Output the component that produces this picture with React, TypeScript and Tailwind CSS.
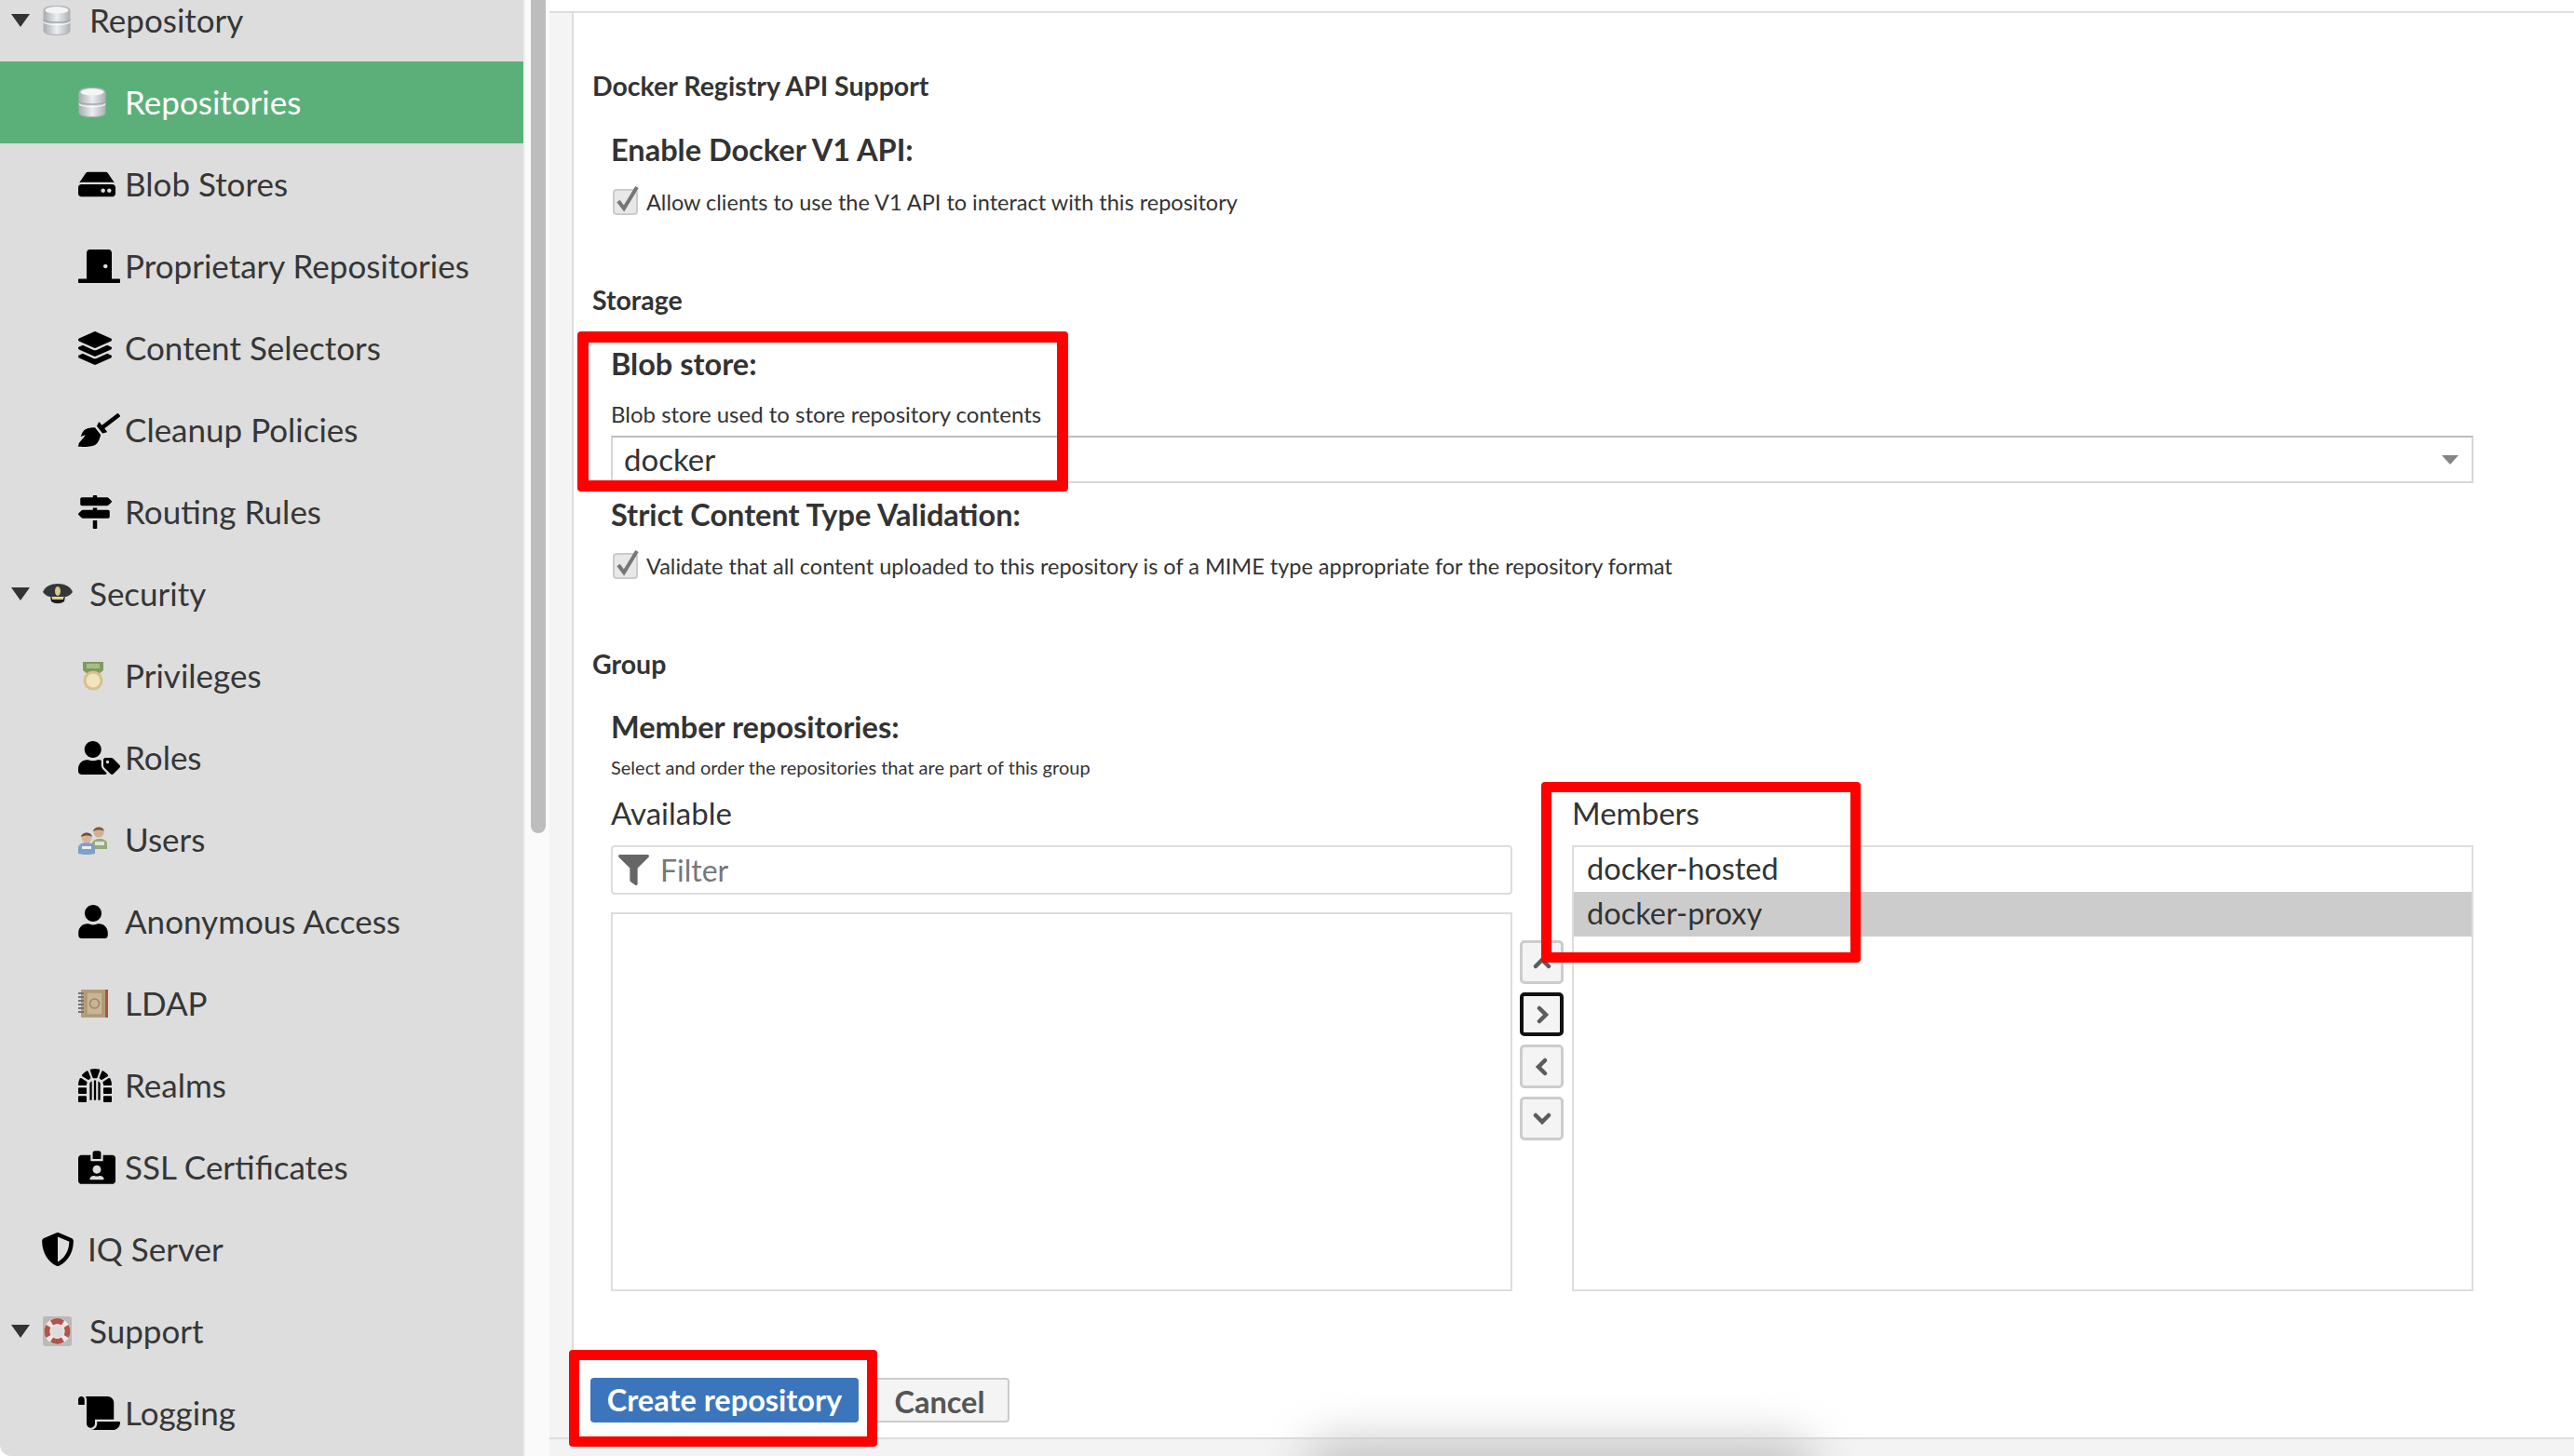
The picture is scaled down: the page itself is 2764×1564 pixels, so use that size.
import {
  FaBroom,
  FaDoorClosed,
  FaDungeon,
  FaHdd,
  FaIdCardAlt,
  FaLayerGroup,
  FaMapSigns,
  FaScroll,
  FaShieldAlt,
  FaUser,
  FaUserTag,
  FaFilter,
} from "react-icons/fa";
import type { ReactNode } from "react";

function DbIcon() {
  return (
    <svg viewBox="0 0 30 32" className="w-[30px] h-[32px]">
      <defs>
        <linearGradient id="dbg" x1="0" x2="1" y1="0" y2="0">
          <stop offset="0" stopColor="#a9adb2" />
          <stop offset="0.5" stopColor="#eceef0" />
          <stop offset="1" stopColor="#adb1b6" />
        </linearGradient>
      </defs>
      <path d="M1 5c0-3 6-4.500 14-4.500S29 2 29 5v22c0 3-6 4.500-14 4.500S1 30 1 27z" fill="url(#dbg)" stroke="#aeb1b5" strokeWidth="1" />
      <ellipse cx="15" cy="5" rx="12.500" ry="3.500" fill="#f4f5f6" />
      <path d="M1 15c2 4 26 4 28 0" fill="none" stroke="#9ea2a6" strokeWidth="1.500" />
      <path d="M1 17.500c2 4 26 4 28 0" fill="none" stroke="#f7f7f8" strokeWidth="1.500" />
    </svg>
  );
}

function CopHat() {
  return (
    <svg viewBox="0 0 32 24" className="w-[32px] h-[24px]">
      <path d="M0 10C2 4 9 1 16 1s14 3 16 9c-2 3-6 5-8 5H8c-2 0-6-2-8-5z" fill="#33363a" />
      <path d="M8 15c4 2 12 2 16 0l-1 5c-4 3-10 3-14 0z" fill="#1e1f21" />
      <ellipse cx="16" cy="9" rx="3" ry="5" fill="#d8c98a" />
      <rect x="10" y="16" width="12" height="2" fill="#d8c98a" />
    </svg>
  );
}

function MedalIcon() {
  return (
    <svg viewBox="0 0 22 31" className="w-[22px] h-[31px]">
      <path d="M0 0h22v9l-5 4H5L0 9z" fill="#7f9a5e" />
      <rect x="4" y="2" width="14" height="5" fill="#a7bd88" />
      <circle cx="11" cy="20" r="10.500" fill="#d9bf8f" />
      <circle cx="11" cy="20" r="7.500" fill="#f0e4bd" />
    </svg>
  );
}

function UsersIcon() {
  return (
    <svg viewBox="0 0 32 31" className="w-[32px] h-[31px]">
      <path d="M15 19c0-3 4-5 8-5s8 2 8 5v6H15z" fill="#94a97c" />
      <rect x="18" y="17" width="10" height="4" fill="#dfe6d5" />
      <circle cx="22" cy="7" r="5.500" fill="#d3ae92" />
      <path d="M16 6c0-5 11-7 12 0-3-2-8-2-12 0z" fill="#7a5a42" />
      <path d="M0 24c0-4 4-6 9-6s9 2 9 6v6c-5 1.500-13 1.500-18 0z" fill="#7e9fc7" />
      <rect x="4" y="22" width="10" height="3" fill="#e9eef5" />
      <circle cx="9" cy="13" r="5.500" fill="#d8b59a" />
      <path d="M3 12c0-5 11-7 12 0-3-2-8-2-12 0z" fill="#6e5039" />
    </svg>
  );
}

function BookIcon() {
  return (
    <svg viewBox="0 0 32 30" className="w-[32px] h-[30px]">
      <rect x="3" y="0" width="29" height="30" rx="1" fill="#b39c78" />
      <rect x="29" y="0" width="3" height="30" fill="#a8563e" />
      <rect x="9" y="3" width="17" height="24" fill="#c8b594" stroke="#a5906e" />
      <circle cx="17.500" cy="15" r="5" fill="none" stroke="#9b8663" strokeWidth="1.500" />
      <path d="M0 4h6M0 8h6M0 12h6M0 16h6M0 20h6M0 24h6" stroke="#77736c" strokeWidth="2" />
    </svg>
  );
}

function RingIcon() {
  return (
    <svg viewBox="0 0 31 32" className="w-[31px] h-[32px]">
      <rect x="0" y="0" width="31" height="32" rx="3" fill="#b9b9b9" />
      <circle cx="15.500" cy="16" r="14" fill="#f0e8e6" />
      <path d="M8 4.500a14 14 0 0 1 15 0l-3 5a8 8 0 0 0-9 0zM8 27.500a14 14 0 0 0 15 0l-3-5a8 8 0 0 1-9 0zM3.500 9a14 14 0 0 0 0 14l5-3a8 8 0 0 1 0-8zM27.500 9a14 14 0 0 1 0 14l-5-3a8 8 0 0 0 0-8z" fill="#b2534c" />
      <circle cx="15.500" cy="16" r="7" fill="#dddddd" />
    </svg>
  );
}

function Caret() {
  return (
    <svg viewBox="0 0 20 14" className="w-[20px] h-[14px]">
      <path d="M0 0h20L10 14z" fill="#333333" />
    </svg>
  );
}

function Chevron({ d }: { d: string }) {
  return (
    <svg viewBox="0 0 20 20" className="w-[20px] h-[20px]">
      <path d={d} fill="none" stroke="#5c5c5c" strokeWidth="4.500" strokeLinecap="round" strokeLinejoin="miter" />
    </svg>
  );
}

type Item = {
  label: string;
  icon: ReactNode;
  level: 0 | 1;
  open?: boolean;
  active?: boolean;
  tight?: boolean;
};

const navItems: Item[] = [
  { label: "Repository", icon: <DbIcon />, level: 0, open: true },
  { label: "Repositories", icon: <DbIcon />, level: 1, active: true },
  { label: "Blob Stores", icon: <FaHdd className="h-[36px] w-[40px] text-black" />, level: 1 },
  { label: "Proprietary Repositories", icon: <FaDoorClosed className="h-[36px] w-[45px] text-black" />, level: 1 },
  { label: "Content Selectors", icon: <FaLayerGroup className="h-[36px] w-[36px] text-black" />, level: 1 },
  { label: "Cleanup Policies", icon: <FaBroom className="h-[36px] w-[45px] text-black" />, level: 1 },
  { label: "Routing Rules", icon: <FaMapSigns className="h-[36px] w-[36px] text-black" />, level: 1 },
  { label: "Security", icon: <CopHat />, level: 0, open: true },
  { label: "Privileges", icon: <div className="pl-[5px]"><MedalIcon /></div>, level: 1 },
  { label: "Roles", icon: <FaUserTag className="h-[36px] w-[45px] text-black" />, level: 1 },
  { label: "Users", icon: <UsersIcon />, level: 1 },
  { label: "Anonymous Access", icon: <FaUser className="h-[36px] w-[32px] text-black" />, level: 1 },
  { label: "LDAP", icon: <BookIcon />, level: 1 },
  { label: "Realms", icon: <FaDungeon className="h-[36px] w-[36px] text-black" />, level: 1 },
  { label: "SSL Certificates", icon: <FaIdCardAlt className="h-[36px] w-[40px] text-black" />, level: 1 },
  { label: "IQ Server", icon: <FaShieldAlt className="h-[36px] w-[36px] text-black" />, level: 0, tight: true },
  { label: "Support", icon: <RingIcon />, level: 0, open: true },
  { label: "Logging", icon: <FaScroll className="h-[36px] w-[45px] text-black" />, level: 1 },
];

function NavRow({ item }: { item: Item }) {
  const indent = item.level === 1 ? "pl-[84px]" : item.tight ? "pl-[10px]" : "pl-[12px]";
  return (
    <div
      className={`h-[88px] shrink-0 flex items-center text-[35px] ${
        item.active ? "bg-[#5bb07a] text-white" : "text-[#363636]"
      } ${indent}`}
    >
      {item.level === 0 && (
        <div className="w-[34px] shrink-0">{item.open && <Caret />}</div>
      )}
      <div className="w-[50px] shrink-0 flex items-center">{item.icon}</div>
      <span className="pb-[2px]">{item.label}</span>
    </div>
  );
}

function CheckRow({ label, className }: { label: string; className: string }) {
  return (
    <div className={`flex items-start gap-[8px] text-[23.5px] leading-[32px] ${className}`}>
      <svg viewBox="0 0 28 32" className="w-[28px] h-[32px] ml-[2px] shrink-0">
        <rect x="1" y="5" width="25" height="26" rx="3" fill="#e8e8e8" stroke="#cccccc" strokeWidth="2" />
        <path d="M6 17l6 8L26 2" fill="none" stroke="#767676" strokeWidth="4" />
      </svg>
      <span className="pt-[2px]">{label}</span>
    </div>
  );
}

function SectionTitle({ children, className }: { children: ReactNode; className: string }) {
  return <h2 className={`text-[28.5px] leading-[32px] font-bold text-[#333] ${className}`}>{children}</h2>;
}

function FieldLabel({ children, className }: { children: ReactNode; className: string }) {
  return <div className={`text-[32.5px] leading-[40px] font-bold text-[#333] ${className}`}>{children}</div>;
}

function MoveButton({ children, focused }: { children: ReactNode; focused?: boolean }) {
  return (
    <button
      className={`w-[47px] h-[47px] rounded-[5px] bg-[#f4f4f4] flex items-center justify-center ${
        focused ? "border-[4px] border-[#111]" : "border-[3px] border-[#cccccc]"
      }`}
    >
      {children}
    </button>
  );
}

export default function App() {
  return (
    <div className="relative h-[1564px] w-[2764px] flex overflow-hidden bg-white rounded-bl-[12px] font-['Lato','Liberation_Sans',sans-serif]">
      {/* Sidebar */}
      <aside className="w-[564px] shrink-0 bg-[#dddddd] border-r-2 border-[#efefef] overflow-hidden">
        <div className="-mt-[22px] flex flex-col">
          {navItems.map((item) => (
            <NavRow key={item.label} item={item} />
          ))}
        </div>
      </aside>

      {/* Scrollbar */}
      <div className="w-[26px] shrink-0 bg-[#fafafa] pl-[6px]">
        <div className="w-[16px] h-[895px] bg-[#bdbdbd] rounded-b-[8px]" />
      </div>

      {/* Main column */}
      <main className="flex-1 min-w-0 flex flex-col bg-white">
        <div className="h-[12px] shrink-0" />
        <div className="h-[1534px] shrink-0 flex border-y-2 border-[#dddddd]">
          <div className="w-[26px] shrink-0 bg-[#f4f4f4] border-r-2 border-[#dddddd]" />
          <div className="flex-1 min-w-0 pl-[20px] text-[#333]">
            <SectionTitle className="mt-[62px]">Docker Registry API Support</SectionTitle>
            <div className="pl-[20px]">
              <FieldLabel className="mt-[33px]">Enable Docker V1 API:</FieldLabel>
              <CheckRow className="mt-[18px]" label="Allow clients to use the V1 API to interact with this repository" />
            </div>
            <SectionTitle className="mt-[73px]">Storage</SectionTitle>
            <div className="pl-[20px] pr-[108px]">
              <FieldLabel className="mt-[33px]">Blob store:</FieldLabel>
              <div className="mt-[20px] text-[24px] leading-[28px]">Blob store used to store repository contents</div>
              <div className="mt-[9px] h-[51px] border-2 border-[#d6d6d6] border-t-[#bdbdbd] flex items-center justify-between pl-[12px] pr-[14px] text-[33px]">
                <span>docker</span>
                <svg viewBox="0 0 18 10" className="w-[18px] h-[10px]">
                  <path d="M0 0h18l-9 10z" fill="#858585" />
                </svg>
              </div>
              <FieldLabel className="mt-[14px]">Strict Content Type Validation:</FieldLabel>
              <CheckRow className="mt-[17px]" label="Validate that all content uploaded to this repository is of a MIME type appropriate for the repository format" />
            </div>
            <SectionTitle className="mt-[73px]">Group</SectionTitle>
            <div className="pl-[20px] pr-[108px]">
              <FieldLabel className="mt-[32px]">Member repositories:</FieldLabel>
              <div className="mt-[11px] text-[20px] leading-[24px]">Select and order the repositories that are part of this group</div>
              <div className="mt-[17px] flex">
                <div className="w-[968px] shrink-0">
                  <div className="text-[33px] leading-[40px]">Available</div>
                  <div className="mt-[15px] h-[53px] border-2 border-[#dddddd] rounded-[4px] flex items-center pl-[6px] gap-[12px] text-[32px] text-[#777]">
                    <FaFilter className="w-[33px] h-[33px] text-[#666]" />
                    <span>Filter</span>
                  </div>
                  <div className="mt-[19px] h-[407px] border-2 border-[#dddddd]" />
                </div>
                <div className="w-[47px] ml-[8px] mr-[9px] shrink-0 pt-[157px] flex flex-col gap-[9px]">
                  <MoveButton><Chevron d="M3 14l7-7 7 7" /></MoveButton>
                  <MoveButton focused><Chevron d="M7 3l7 7-7 7" /></MoveButton>
                  <MoveButton><Chevron d="M13 3l-7 7 7 7" /></MoveButton>
                  <MoveButton><Chevron d="M3 6l7 7 7-7" /></MoveButton>
                </div>
                <div className="flex-1 min-w-0">
                  <div className="text-[33px] leading-[40px]">Members</div>
                  <div className="mt-[15px] h-[479px] border-2 border-[#dddddd] text-[32.5px]">
                    <div className="h-[48px] flex items-center pl-[14px] pb-[2px]">docker-hosted</div>
                    <div className="h-[48px] flex items-center pl-[14px] pb-[2px] bg-[#cccccc]">docker-proxy</div>
                  </div>
                </div>
              </div>
            </div>
            <div className="mt-[93px] flex -ml-[2px] gap-[12px]">
              <button className="w-[288px] h-[48px] pb-[2px] rounded-[4px] bg-[#3b75bc] text-white font-bold text-[32.5px]">Create repository</button>
              <button className="w-[150px] h-[48px] pb-[3px] rounded-[4px] bg-[#f4f4f4] border-2 border-[#cccccc] text-[#555] font-bold text-[32.5px]">Cancel</button>
            </div>
          </div>
        </div>
        <div className="flex-1 bg-[#f3f3f3]" />
      </main>

      {/* Red annotation boxes */}
      <div className="absolute left-[620px] top-[356px] w-[527px] h-[172px] border-[12px] border-[#ff0000] rounded-[4px]" />
      <div className="absolute left-[1655px] top-[840px] w-[343px] h-[194px] border-[11px] border-[#ff0000] rounded-[4px]" />
      <div className="absolute left-[611px] top-[1450px] w-[331px] h-[104px] border-[11px] border-[#ff0000] rounded-[4px]" />

      {/* Blurred shadow at the bottom edge */}
      <div className="absolute left-[1400px] top-[1548px] w-[550px] h-[70px] rounded-[40px] bg-[#c4c4c4] blur-[25px] pointer-events-none" />
    </div>
  );
}
